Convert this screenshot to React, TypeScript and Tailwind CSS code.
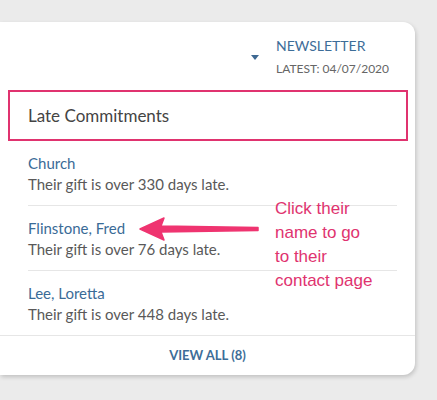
const items = [
  { name: "Church", days: 330 },
  { name: "Flinstone, Fred", days: 76 },
  { name: "Lee, Loretta", days: 448 },
];

const App = () => {
  return (
    <div className="relative min-h-[400px] bg-[#ebebeb] pt-[22px] font-['Lato',sans-serif]">
      <div className="w-[415px] bg-white rounded-r-[12px] shadow-[1px_2px_4px_rgba(0,0,0,0.18)]">
        {/* header */}
        <div className="h-[68px] flex pl-[251px] pt-[14px]">
          <div className="w-[8px] pt-[19px]">
            <svg width="8" height="5" viewBox="0 0 8 5">
              <path d="M0 0 L8 0 L4 5 Z" fill="#3d6892" />
            </svg>
          </div>
          <div className="ml-[17px] flex flex-col">
            <span className="text-[14px] leading-[20px] text-[#3d6d98]">NEWSLETTER</span>
            <span className="text-[12px] leading-[26px] text-[#666]">LATEST: 04/07/2020</span>
          </div>
        </div>

        {/* highlighted title */}
        <div className="ml-[8px] w-[400px] h-[51px] border-2 border-[#e0336f] flex items-center pl-[18px]">
          <span className="text-[17px] text-[#444]">Late Commitments</span>
        </div>

        {/* list */}
        <div className="px-[28px] pr-[18px]">
          {items.map((it, i) => (
            <div
              key={it.name}
              className={
                "pt-[12px] pb-[10px] " +
                (i < items.length - 1 ? "border-b border-[#e6e6e6]" : "")
              }
            >
              <div className="text-[15px] leading-[21px] text-[#3a6b97]">{it.name}</div>
              <div className="text-[15px] leading-[21px] text-[#595959]">
                Their gift is over {it.days} days late.
              </div>
            </div>
          ))}
        </div>

        <div className="border-t border-[#e6e6e6] h-[40px] flex items-center justify-center">
          <span className="text-[13px] font-bold text-[#3d6d98]">VIEW ALL (8)</span>
        </div>
      </div>

      {/* annotation */}
      <div className="absolute left-[275px] top-[197px] text-[17px] leading-[24px] text-[#e0336f] font-['Liberation_Sans',Arial,sans-serif]">
        <div>Click their</div>
        <div>name to go</div>
        <div>to their</div>
        <div>contact page</div>
      </div>
      <svg className="absolute left-[138px] top-[216px]" width="124" height="26" viewBox="0 0 124 26">
        <path
          d="M2 13 L26 2 L23 10 L120 11.5 L120 14.5 L23 16 L26 24 Z"
          fill="#ef3470"
          stroke="#ef3470"
          strokeWidth="1.5"
          strokeLinejoin="round"
        />
      </svg>
    </div>
  );
};

export default App;
